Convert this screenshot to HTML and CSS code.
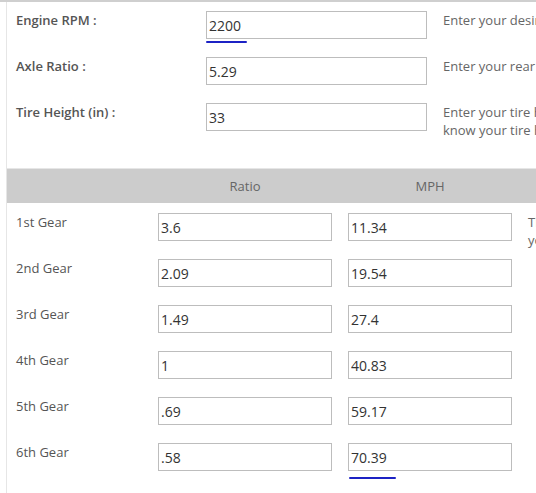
FILE: index.html
```html
<!DOCTYPE html>
<html lang="en">
<head>
    <meta charset="UTF-8">
    <meta name="viewport" content="width=device-width, initial-scale=1.0">
    <title>Gear Ratio Calculator</title>
    <link rel="stylesheet" href="styles.css">
</head>
<body>
    <div class="top-line"></div>
    <div class="calculator">
        <div class="inputs">
            <div class="row">
                <label for="rpm">Engine RPM :</label>
                <div class="field">
                    <input type="text" id="rpm" value="2200">
                    <span class="mark mark-rpm"></span>
                </div>
                <p class="hint">Enter your desired engine RPM at cruising speed.</p>
            </div>
            <div class="row">
                <label for="axle">Axle Ratio :</label>
                <div class="field"><input type="text" id="axle" value="5.29"></div>
                <p class="hint">Enter your rear axle ratio.</p>
            </div>
            <div class="row">
                <label for="tire">Tire Height (in) :</label>
                <div class="field"><input type="text" id="tire" value="33"></div>
                <p class="hint">Enter your tire height in inches. If you don't<br>know your tire height, use the tire calculator.</p>
            </div>
        </div>

        <div class="gears">
            <div class="gear-head">
                <span></span>
                <span>Ratio</span>
                <span>MPH</span>
            </div>
            <div class="gear-row">
                <span class="gear-name">1st Gear</span>
                <input type="text" value="3.6">
                <input type="text" value="11.34">
                <p class="hint">The speed in each gear at<br>your chosen engine RPM.</p>
            </div>
            <div class="gear-row">
                <span class="gear-name">2nd Gear</span>
                <input type="text" value="2.09">
                <input type="text" value="19.54">
            </div>
            <div class="gear-row">
                <span class="gear-name">3rd Gear</span>
                <input type="text" value="1.49">
                <input type="text" value="27.4">
            </div>
            <div class="gear-row">
                <span class="gear-name">4th Gear</span>
                <input type="text" value="1">
                <input type="text" value="40.83">
            </div>
            <div class="gear-row">
                <span class="gear-name">5th Gear</span>
                <input type="text" value=".69">
                <input type="text" value="59.17">
            </div>
            <div class="gear-row">
                <span class="gear-name">6th Gear</span>
                <input type="text" value=".58">
                <div class="field">
                    <input type="text" value="70.39">
                    <span class="mark mark-mph"></span>
                </div>
            </div>
        </div>
    </div>
</body>
</html>
```

FILE: styles.css
```css
html, body {
    overflow: hidden;
}
body {
    margin: 0;
    padding: 0;
    font-family: "Open Sans", Arial, sans-serif;
    font-size: 13px;
    color: #555;
    background: #fff;
    height: 493px;
}
.top-line {
    height: 2px;
    background: #cfcfcf;
}
.calculator {
    margin-left: 6px;
    border-left: 1px solid #e6e6e6;
    height: 491px;
    width: 800px;
}
.inputs {
    padding: 9px 0 37px 9px;
    border-bottom: 1px solid #e6e6e6;
}
.row {
    display: grid;
    grid-template-columns: 174px 221px 300px;
    column-gap: 16px;
    align-items: start;
    height: 28px;
    margin-bottom: 18px;
}
.row:last-child {
    margin-bottom: 0;
}
.row label {
    font-weight: 600;
    line-height: 18px;
}
.hint {
    margin: 0;
    color: #666;
    line-height: 18px;
    white-space: nowrap;
}
.field {
    position: relative;
}
input {
    box-sizing: border-box;
    width: 100%;
    height: 28px;
    margin: 0;
    padding: 0 2px;
    border: 1px solid #bdbdbd;
    border-radius: 0;
    font-family: "Open Sans", Arial, sans-serif;
    font-size: 14px;
    color: #333;
    background: #fff;
}
.mark {
    position: absolute;
    height: 2px;
    background: #1c22c4;
    border-radius: 1px;
}
.mark-rpm {
    left: 0;
    top: 30px;
    width: 41px;
}
.mark-mph {
    left: 1px;
    top: 34px;
    width: 47px;
}
.gear-head {
    display: grid;
    grid-template-columns: 126px 174px 164px;
    column-gap: 16px;
    height: 34px;
    align-items: center;
    background: #cccccc;
    color: #666;
    padding-left: 9px;
}
.gear-head span {
    text-align: center;
}
.gear-row {
    display: grid;
    grid-template-columns: 126px 174px 164px 300px;
    column-gap: 16px;
    align-items: start;
    height: 28px;
    padding-left: 9px;
    margin-top: 18px;
}
.gear-head + .gear-row {
    margin-top: 10px;
}
.gear-name {
    line-height: 18px;
}
```
